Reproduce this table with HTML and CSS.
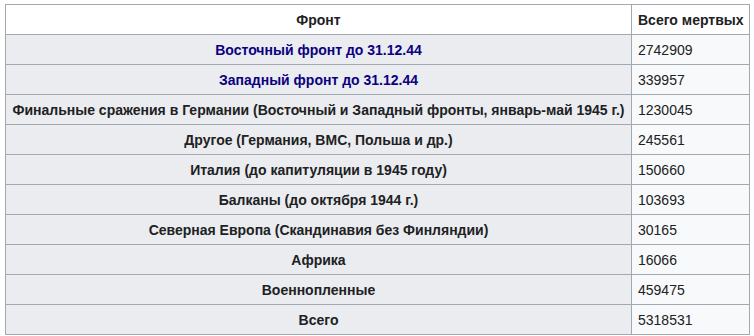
FILE: index.html
```html
<!DOCTYPE html>
<html lang="ru">
<head>
<meta charset="utf-8">
<link rel="stylesheet" href="styles.css">
</head>
<body>
<table class="wikitable">
<colgroup><col class="c1"><col class="c2"></colgroup>
<thead>
<tr><th class="head">Фронт</th><th class="head head-left">Всего мертвых</th></tr>
</thead>
<tbody>
<tr><th><a href="#">Восточный фронт до 31.12.44</a></th><td>2742909</td></tr>
<tr><th><a href="#">Западный фронт до 31.12.44</a></th><td>339957</td></tr>
<tr><th>Финальные сражения в Германии (Восточный и Западный фронты, январь-май 1945 г.)</th><td>1230045</td></tr>
<tr><th>Другое (Германия, ВМС, Польша и др.)</th><td>245561</td></tr>
<tr><th>Италия (до капитуляции в 1945 году)</th><td>150660</td></tr>
<tr><th>Балканы (до октября 1944 г.)</th><td>103693</td></tr>
<tr><th>Северная Европа (Скандинавия без Финляндии)</th><td>30165</td></tr>
<tr><th>Африка</th><td>16066</td></tr>
<tr><th>Военнопленные</th><td>459475</td></tr>
<tr><th>Всего</th><td>5318531</td></tr>
</tbody>
</table>
</body>
</html>
```
FILE: styles.css
```css
html, body {
  margin: 0;
  background: #ffffff;
}
body {
  padding: 4px 5px;
  font-family: "Liberation Sans", Arial, sans-serif;
  font-size: 14px;
  color: #202122;
}
.wikitable {
  border-collapse: collapse;
  table-layout: fixed;
  width: 744px;
  border: 1px solid #a2a9b1;
}
.c1 { width: 626px; }
.c2 { width: 118px; }
.wikitable th,
.wikitable td {
  border: 1px solid #a2a9b1;
  height: 30px;
  padding: 0 6px;
  line-height: 20px;
  box-sizing: border-box;
  vertical-align: middle;
  white-space: nowrap;
}
.wikitable th {
  background: #eaecf0;
  font-weight: bold;
  text-align: center;
}
.wikitable td {
  background: #f8f9fa;
  text-align: left;
}
.wikitable th.head {
  background: #ffffff;
}
.wikitable th.head-left {
  text-align: left;
}
.wikitable a {
  color: #0b0080;
  text-decoration: none;
}
```
